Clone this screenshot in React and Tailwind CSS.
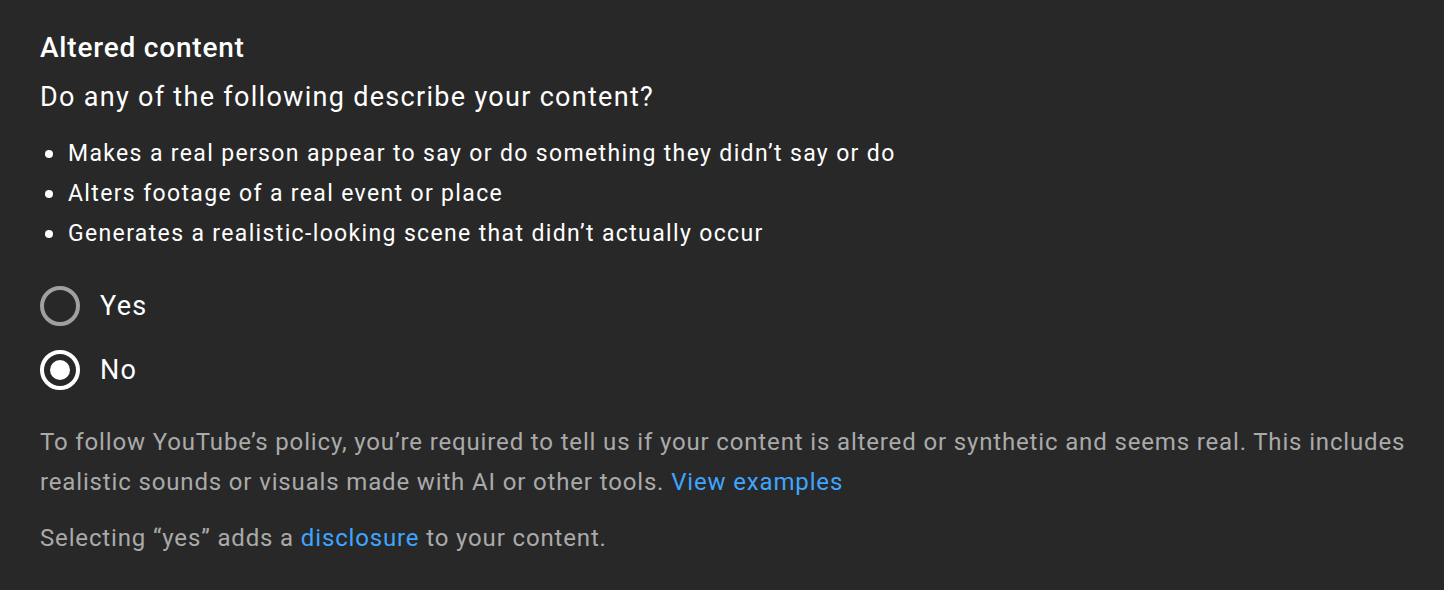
import React from "react";

function Bullet({ children }) {
  return (
    <li className="flex items-center h-[40px]">
      <span className="w-[8px] h-[8px] rounded-full bg-white ml-[5px] mr-[15px]" />
      <span>{children}</span>
    </li>
  );
}

function Radio({ checked, label }) {
  return (
    <div className="flex items-center h-[64px]">
      {checked ? (
        <span className="w-[40px] h-[40px] rounded-full border-[4px] border-white flex items-center justify-center">
          <span className="w-[20px] h-[20px] rounded-full bg-white" />
        </span>
      ) : (
        <span className="w-[40px] h-[40px] rounded-full border-[4px] border-[#a0a0a0]" />
      )}
      <span className="ml-[20px] text-[27px] tracking-[1.3px] text-white">{label}</span>
    </div>
  );
}

export default function App() {
  return (
    <div
      className="w-[1444px] h-[590px] bg-[#282828] pl-[40px] pt-[32px] text-white"
      style={{ fontFamily: "Roboto, 'Noto Sans', sans-serif" }}
    >
      <h2 className="text-[28px] leading-[32px] font-medium tracking-[0.8px]">Altered content</h2>
      <p className="mt-[15px] text-[27px] leading-[36px] tracking-[1.3px]">Do any of the following describe your content?</p>
      <ul className="mt-[19px] text-[23px] tracking-[1.35px]">
        <Bullet>Makes a real person appear to say or do something they didn’t say or do</Bullet>
        <Bullet>Alters footage of a real event or place</Bullet>
        <Bullet>Generates a realistic-looking scene that didn’t actually occur</Bullet>
      </ul>
      <div className="mt-[20px]">
        <Radio label="Yes" />
        <Radio checked label="No" />
      </div>
      <p className="mt-[20px] text-[24px] leading-[40px] tracking-[0.85px] text-[#aaaaaa] w-[1406px]">
        To follow YouTube’s policy, you’re required to tell us if your content is altered or synthetic and seems real. This includes realistic sounds or visuals made with AI or other tools.{" "}
        <span className="text-[#3ea6ff]">View examples</span>
      </p>
      <p className="mt-[16px] text-[24px] leading-[40px] tracking-[0.85px] text-[#aaaaaa]">
        Selecting “yes” adds a <span className="text-[#3ea6ff]">disclosure</span> to your content.
      </p>
    </div>
  );
}
